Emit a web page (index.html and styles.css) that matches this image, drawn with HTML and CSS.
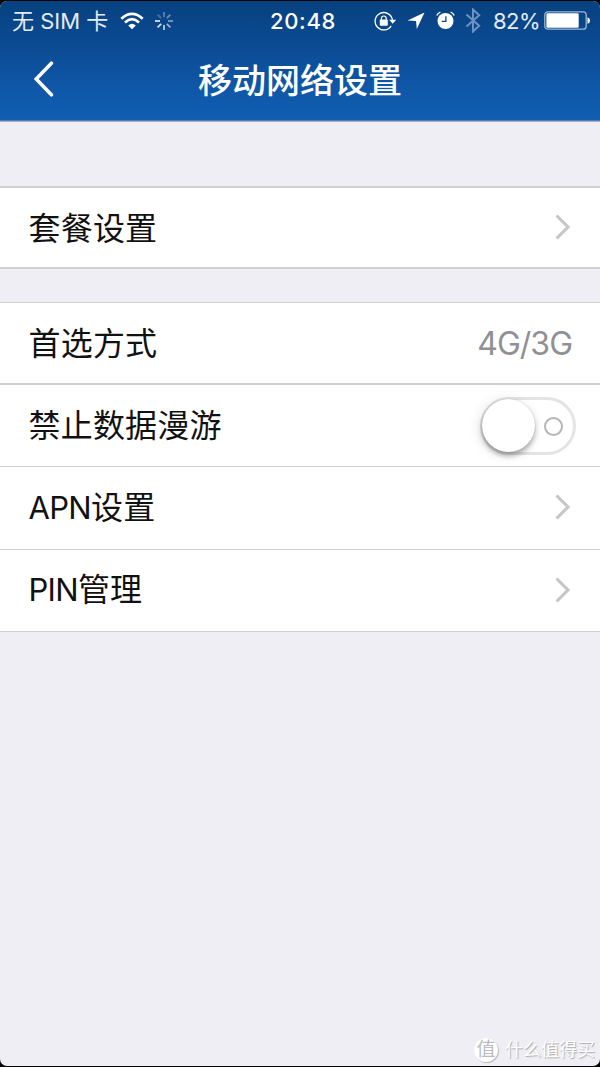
FILE: index.html
```html
<!DOCTYPE html>
<html lang="zh-CN">
<head>
<meta charset="utf-8">
<title>移动网络设置</title>
<link rel="stylesheet" href="styles.css">
</head>
<body>
<div class="screen">
  <header class="header">
    <div class="status">
      <div class="status-left">
        <span class="carrier">无 SIM 卡</span>
        <svg class="wifi" width="24" height="18" viewBox="0 0 24 18" fill="none" stroke="#fff" stroke-width="2.7">
          <path d="M1.3 6.7Q12-3 22.7 6.7"/><path d="M5 10.4Q12 4 19 10.4"/>
          <path d="M8.2 13.4Q12 10.2 15.8 13.4L12 17.2Z" fill="#fff" stroke="none"/>
        </svg>
        <svg class="spinner" width="20" height="20" viewBox="-10 -10 20 20" stroke="#fff" stroke-width="1.7">
          <path d="M0-4V-9" opacity=".35"/><path d="M2.8-2.8 6.4-6.4" opacity=".4"/><path d="M4 0H9" opacity=".5"/>
          <path d="M2.8 2.8 6.4 6.4" opacity=".6"/><path d="M0 4V9" opacity=".75"/><path d="M-2.8 2.8-6.4 6.4" opacity=".85"/>
          <path d="M-4 0H-9"/><path d="M-2.8-2.8-6.4-6.4" opacity=".25"/>
        </svg>
      </div>
      <span class="clock">20:48</span>
      <div class="status-right">
        <svg width="23" height="20" viewBox="0 0 23 20">
          <path d="M17.2 14.8A8.7 8.7 0 1 1 18.4 9" fill="none" stroke="#fff" stroke-width="1.3"/>
          <path d="M15.2 8.8H22.2L18.7 12.7Z" fill="#fff"/>
          <rect x="5.8" y="8.6" width="8" height="6.2" rx=".7" fill="#fff"/>
          <path d="M7.4 9V7.4a2.4 2.4 0 0 1 4.8 0V9" fill="none" stroke="#fff" stroke-width="1.2"/>
        </svg>
        <svg class="location" width="18" height="18" viewBox="0 0 18 18"><path d="M17.5.5 9.8 17 9 9.1.5 8.4Z" fill="#fff"/></svg>
        <svg class="alarm" width="19" height="19" viewBox="0 0 19 19">
          <circle cx="9.5" cy="10" r="8" fill="#fff"/>
          <path d="M.8 4.6Q1.8 2 4.4 1.2M14.6 1.2Q17.2 2 18.2 4.6" fill="none" stroke="#fff" stroke-width="1.4"/>
          <path d="M9.9 5.2V10.3H5.7" fill="none" stroke="#0b488d" stroke-width="1.3"/>
        </svg>
        <svg class="bluetooth" width="16" height="25" viewBox="0 0 16 25"><path d="M1.5 6.5 14.2 17.7 8 23.5V1.5L14.2 7.2 1.5 18.5" fill="none" stroke="#6f92c0" stroke-width="2"/></svg>
        <span class="percent">82%</span>
        <svg class="battery" width="46" height="19" viewBox="0 0 46 19">
          <rect x=".8" y=".8" width="41.4" height="17.4" rx="3" fill="none" stroke="#9db6d6" stroke-width="1.3"/>
          <rect x="2.4" y="2.3" width="32.3" height="14.4" rx="1.3" fill="#fff"/>
          <path d="M43.5 6.2Q46 7 46 9.5T43.5 12.8Z" fill="#fff"/>
        </svg>
      </div>
    </div>
    <nav class="navbar">
      <svg class="back" width="20" height="36" viewBox="0 0 20 36"><path d="M17.4 2.2 2.2 18 17.4 33.8" fill="none" stroke="#fff" stroke-width="3.5" stroke-linecap="round" stroke-linejoin="miter"/></svg>
      <h1 class="title">移动网络设置</h1>
    </nav>
  </header>
  <main>
    <section class="group group-first">
      <div class="row row-plan"><span class="label">套餐设置</span><svg class="chevron" width="16" height="26" viewBox="0 0 16 26"><path d="M2.5 2.5 13 13 2.5 23.5"/></svg></div>
    </section>
    <section class="group">
      <div class="row row-mode"><span class="label">首选方式</span><span class="value">4G/3G</span></div>
      <div class="row row-roaming"><span class="label">禁止数据漫游</span><span class="switch"><span class="knob"></span><span class="off-mark"></span></span></div>
      <div class="row"><span class="label"><span class="latin">APN</span>设置</span><svg class="chevron" width="16" height="26" viewBox="0 0 16 26"><path d="M2.5 2.5 13 13 2.5 23.5"/></svg></div>
      <div class="row"><span class="label"><span class="latin">PIN</span>管理</span><svg class="chevron" width="16" height="26" viewBox="0 0 16 26"><path d="M2.5 2.5 13 13 2.5 23.5"/></svg></div>
    </section>
  </main>
  <footer class="watermark"><span class="seal">值</span><span>什么值得买</span></footer>
</div>
</body>
</html>
```
FILE: styles.css
```css
* { box-sizing: border-box; }
body {
  margin: 0;
  padding: 1px 0;
  height: 1067px;
  background: #050505;
  font-family: Inter, "Noto Sans CJK SC", sans-serif;
  color: #111;
}
.screen {
  height: 1065px;
  display: flex;
  flex-direction: column;
  background: #efeef4;
  border-radius: 7px;
  overflow: hidden;
}
main { flex: 1; }
.header {
  height: 121px;
  background: linear-gradient(#07417f, #0b4a92 35%, #0f58a9 75%, #115eb2);
  border-bottom: 1px solid #b0adb8;
  box-shadow: inset 0 -1px #4a7fbd;
  color: #fff;
}
.status {
  height: 38px;
  display: grid;
  grid-template-columns: 1fr auto 1fr;
  align-items: center;
  font-size: 22px;
  line-height: 38px;
}
.status-left, .status-right { display: flex; align-items: center; height: 38px; }
.status-left { padding-left: 12px; }
.status-right { justify-content: flex-end; padding-right: 10px; }
.carrier { width: 97px; white-space: nowrap; color: #e4ebf5; }
.wifi { margin-left: 11px; }
.spinner { margin-left: 10px; }
.clock { font-weight: 500; letter-spacing: .7px; padding: 1px 0 0 6px; }
.location { margin-left: 10px; }
.alarm { margin-left: 11px; }
.bluetooth { margin-left: 10px; }
.percent { width: 45px; margin-left: 12px; padding-top: 1px; color: #e4ebf5; letter-spacing: -.5px; white-space: nowrap; }
.battery { margin-left: 6px; }
.navbar {
  height: 80px;
  display: grid;
  grid-template-columns: 90px 1fr 90px;
  align-items: center;
}
.back { margin-left: 34px; margin-top: -1px; }
.title {
  margin: 0;
  padding-top: 3px;
  text-align: center;
  font-size: 34px;
  line-height: 40px;
  font-weight: 500;
}
.group {
  background: #fff;
  border-top: 1px solid #cfced4;
  margin-top: 33px;
}
.group-first { margin-top: 64px; border-top: 2px solid #cfced3; }
.row {
  height: 82.5px;
  padding: 0 29px 0 28.5px;
  display: flex;
  align-items: center;
  justify-content: space-between;
  border-bottom: 1px solid #cfced3;
}
.row-plan { height: 81px; border-bottom-width: 2px; }
.row-mode { height: 82px; border-bottom-width: 2px; }
.row-roaming { height: 82px; padding-right: 24px; }
.label { font-size: 32px; line-height: 40px; letter-spacing: .2px; }
.row-plan .label, .row-mode .label { padding-top: 2px; }
.latin { font-size: 31px; letter-spacing: -.7px; }
.chevron {
  margin-bottom: 1px;
  fill: none;
  stroke: #c5c5ca;
  stroke-width: 3.1;
  stroke-linecap: round;
}
.value { font-size: 32px; letter-spacing: -1px; padding-top: 1px; margin-right: -1px; color: #909095; }
.switch {
  width: 96px;
  height: 58px;
  border: 3px solid #e4e4e5;
  border-radius: 29px;
  display: flex;
  align-items: center;
  justify-content: space-between;
  padding-right: 10px;
}
.knob {
  width: 53px;
  height: 53px;
  margin-left: -1px;
  border-radius: 50%;
  background: #fff;
  box-shadow: 0 4px 5px rgba(0,0,0,.28), -2px 2px 13px rgba(0,0,0,.12), 0 0 1px rgba(0,0,0,.25);
}
.off-mark { width: 19px; height: 19px; margin-top: 2px; border: 2px solid #b5b5b5; border-radius: 50%; }
.watermark {
  height: 34px;
  padding: 1px 5px 0 0;
  display: flex;
  align-items: center;
  justify-content: flex-end;
  gap: 7px;
  font-size: 18px;
  line-height: 30px;
  color: #fff;
  text-shadow: 1px 1px 1px #aaa;
}
.seal {
  width: 24px;
  height: 24px;
  border-radius: 50%;
  background: #fff;
  color: #bcbcc0;
  text-align: center;
  font-size: 19px;
  line-height: 24px;
  text-shadow: none;
  box-shadow: 1px 1px 1px #bbb;
}
```
